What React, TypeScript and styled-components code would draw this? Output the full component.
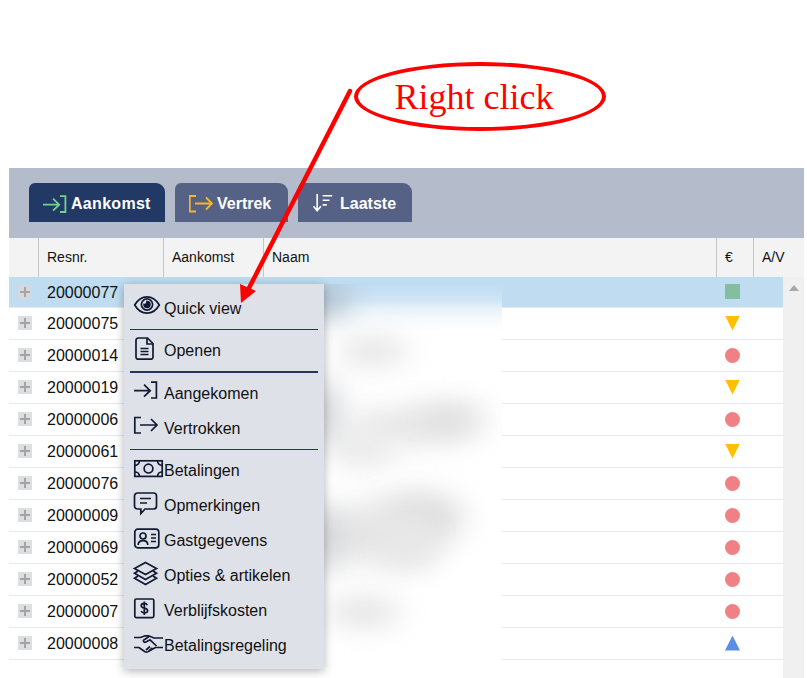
import React from "react";
import styled, { createGlobalStyle } from "styled-components";

const rows = [
  { id: "20000077", status: "square" },
  { id: "20000075", status: "down" },
  { id: "20000014", status: "circle" },
  { id: "20000019", status: "down" },
  { id: "20000006", status: "circle" },
  { id: "20000061", status: "down" },
  { id: "20000076", status: "circle" },
  { id: "20000009", status: "circle" },
  { id: "20000069", status: "circle" },
  { id: "20000052", status: "circle" },
  { id: "20000007", status: "circle" },
  { id: "20000008", status: "up" },
];

// blurred out guest names
const smudges = [
  { x: 14, y: 56, w: 70, h: 22, tone: "#dddddd" },
  { x: 24, y: 124, w: 130, h: 36, tone: "#e6e6e6" },
  { x: 92, y: 122, w: 70, h: 24, tone: "#dcdcdc" },
  { x: 10, y: 150, w: 60, h: 34, tone: "#e8e8e8" },
  { x: 55, y: 208, w: 85, h: 52, tone: "#dedede" },
  { x: 0, y: 218, w: 110, h: 64, tone: "#e6e6e6" },
  { x: 60, y: 245, w: 55, h: 40, tone: "#e8e8e8" },
  { x: 2, y: 315, w: 75, h: 26, tone: "#e0e0e0" },
  { x: -10, y: 0, w: 32, h: 34, tone: "#a9b6c2" },
  { x: -10, y: 95, w: 24, h: 70, tone: "#c8cace" },
  { x: -10, y: 220, w: 24, h: 70, tone: "#c8cace" },
];

const ArrowIn = () => (
  <>
    <path d="M0 9.7H16M10 3.7L16.2 9.7L10 15.7" />
    <path d="M17 1.2H22.4V17H17" />
  </>
);

const ArrowOut = () => (
  <>
    <path d="M7 1.5H.8V17H7" />
    <path d="M6 9H23M17 3L23 9L17 15" />
  </>
);

const menuIcons: Record<string, React.ReactNode> = {
  eye: (
    <>
      <path d="M.7 9C4 3.2 8 .8 13 .8S22 3.2 25.3 9C22 14.8 18 17.2 13 17.2S4 14.8 .7 9Z" />
      <circle cx="13" cy="8.5" r="5.6" />
      <path d="M13 5.6a2.9 2.9 0 1 1-2.9 2.9c1.6.4 3.2-1 2.9-2.9Z" fill="#111a33" />
    </>
  ),
  file: (
    <>
      <path d="M2 2.2A2.2 2.2 0 0 1 4.2 0H13.5L19 5.5V19A2.2 2.2 0 0 1 16.8 21.2H4.2A2.2 2.2 0 0 1 2 19Z" />
      <path d="M13 .2V6H19" />
      <path d="M6.5 10.5H14.5M6.5 13.5H14.5M6.5 16.5H14.5" />
    </>
  ),
  in: <ArrowIn />,
  out: <ArrowOut />,
  cash: (
    <>
      <rect x=".8" y="2.8" width="27.4" height="15.6" />
      <circle cx="14.5" cy="10.6" r="4.4" />
      <path d="M1 7.3A4.4 4.4 0 0 0 5.4 3M23.6 3A4.4 4.4 0 0 0 28 7.3M1 14A4.4 4.4 0 0 1 5.4 18.2M23.6 18.2A4.4 4.4 0 0 1 28 14" />
    </>
  ),
  chat: (
    <>
      <path d="M3.5 0H19.5A3 3 0 0 1 22.5 3V13A3 3 0 0 1 19.5 16H11L6.8 20.5V16H3.5A3 3 0 0 1 .5 13V3A3 3 0 0 1 3.5 0Z" />
      <path d="M6 5.5H17M6 10H13" />
    </>
  ),
  card: (
    <>
      <rect x=".8" y="1.2" width="24" height="18.6" rx="3" />
      <circle cx="9" cy="8" r="3" />
      <path d="M4.2 17C4.2 14 6 12.6 9 12.6S13.8 14 13.8 17" />
      <path d="M17 6.5H22M17 10H22M17 13.5H22" />
    </>
  ),
  layers: (
    <>
      <path d="M11.5-.5L22.5 5.5L11.5 11.5L.5 5.5Z" />
      <path d="M4 8L.5 10.2L11.5 16.4L22.5 10.2L19 8" />
      <path d="M4 13L.5 15.2L11.5 21.4L22.5 15.2L19 13" />
    </>
  ),
  fee: (
    <>
      <rect x=".8" y="1" width="19" height="18.6" rx="1.5" />
      <path d="M13.2 7.2C12.8 6 11.8 5.4 10.3 5.4 8.4 5.4 7.2 6.3 7.2 7.8 7.2 11.2 13.6 9.2 13.6 12.6 13.6 14.1 12.3 15 10.3 15 8.7 15 7.6 14.3 7.2 13.1M10.3 3.4V17" />
    </>
  ),
  shake: (
    <>
      <path d="M0 4.5H6.5L11 2.8H14.5L20 5H29" />
      <path d="M0 14.5H5L11 18.8C12.5 19.5 14 19 15 18L21.5 14.5H29" />
      <path d="M15 3.5L9.5 7.2C9 8.8 10.5 9.8 12 9L16 6.8L22.5 13" />
      <path d="M12 17L16 13.5M15 18L18.5 15" />
    </>
  ),
};

const menu = [
  { label: "Quick view", icon: "eye" },
  { divider: "thin" },
  { label: "Openen", icon: "file" },
  { divider: "thick" },
  { label: "Aangekomen", icon: "in" },
  { label: "Vertrokken", icon: "out" },
  { divider: "thin" },
  { label: "Betalingen", icon: "cash" },
  { label: "Opmerkingen", icon: "chat" },
  { label: "Gastgegevens", icon: "card" },
  { label: "Opties & artikelen", icon: "layers" },
  { label: "Verblijfskosten", icon: "fee" },
  { label: "Betalingsregeling", icon: "shake" },
];

const App = () => {
  return (
    <Page>
      <GlobalStyle />
      <Panel>
        <Toolbar>
          <Tab $active $width={136}>
            <TabIcon $color="#72d28c" viewBox="0 -1 24 18">
              <ArrowIn />
            </TabIcon>
            Aankomst
          </Tab>
          <Tab $width={113}>
            <TabIcon $color="#f6b626" viewBox="0 -.5 24 18">
              <ArrowOut />
            </TabIcon>
            Vertrek
          </Tab>
          <Tab $width={114}>
            <TabIcon $color="#ffffff" viewBox="0 0 24 22">
              <path d="M4.5 1V19M.5 14.5L4.5 19.5L8.5 14.5" />
              <path d="M10.5 3H21M10.5 8H18M10.5 13H15" />
            </TabIcon>
            Laatste
          </Tab>
        </Toolbar>
        <HeaderRow>
          <HeaderCell />
          <HeaderCell>Resnr.</HeaderCell>
          <HeaderCell>Aankomst</HeaderCell>
          <HeaderCell>Naam</HeaderCell>
          <HeaderCell>€</HeaderCell>
          <HeaderCell>A/V</HeaderCell>
        </HeaderRow>
        <Body>
          <Rows>
            {rows.map((row, i) => (
              <Row key={row.id} $selected={i === 0}>
                <Expander />
                <ResNr>{row.id}</ResNr>
                <StatusCell>
                  <Status $kind={row.status} />
                </StatusCell>
              </Row>
            ))}
          </Rows>
          <ScrollTrack>
            <ScrollUp />
          </ScrollTrack>
        </Body>
      </Panel>

      <Redacted>
        {smudges.map((s, i) => (
          <Smudge key={i} $x={s.x} $y={s.y} $w={s.w} $h={s.h} $tone={s.tone} />
        ))}
      </Redacted>

      <ContextMenu>
        {menu.map((item, i) =>
          item.divider ? (
            <Divider key={i} $thick={item.divider === "thick"} />
          ) : (
            <MenuItem key={i}>
              <MenuIcon viewBox="0 0 30 25">{menuIcons[item.icon!]}</MenuIcon>
              {item.label}
            </MenuItem>
          )
        )}
      </ContextMenu>

      <Callout>Right click</Callout>
      <Pointer viewBox="0 0 150 225">
        <line x1="141" y1="3" x2="40" y2="200" />
        <polygon points="31,196 47,203 32,215" />
      </Pointer>
    </Page>
  );
};

export default App;

const GlobalStyle = createGlobalStyle`
  html, body {
    margin: 0;
    padding: 0;
    background: #fff;
    overflow: hidden;
  }
`;
const Page = styled.div`
  position: relative;
  width: 807px;
  height: 678px;
  overflow: hidden;
  padding: 168px 3px 0 9px;
  box-sizing: border-box;
  display: flex;
  font-family: "Liberation Sans", Arial, sans-serif;
  color: #111;
`;
const Panel = styled.div`
  flex: 1;
  display: flex;
  flex-direction: column;
`;
const Toolbar = styled.div`
  height: 70px;
  box-sizing: border-box;
  padding: 15px 0 0 20px;
  background-color: #b4bccc;
  display: flex;
  gap: 10px;
`;
const Tab = styled.div<{ $active?: boolean; $width: number }>`
  width: ${(p) => p.$width}px;
  height: 39px;
  box-sizing: border-box;
  padding: 2px 0 0 14px;
  display: flex;
  align-items: center;
  gap: 4px;
  border-radius: 6px 9px 0 0;
  background-color: ${(p) => (p.$active ? "#223965" : "#556285")};
  color: white;
  font-size: 16px;
  font-weight: bold;
  letter-spacing: ${(p) => (p.$active ? "0.3px" : "0")};
`;
const TabIcon = styled.svg<{ $color: string }>`
  width: 24px;
  height: 20px;
  margin-top: -2px;
  fill: none;
  stroke: ${(p) => p.$color};
  stroke-width: 1.8;
`;
const HeaderRow = styled.div`
  height: 39px;
  display: grid;
  grid-template-columns: 30px 125px 100px 453px 37px 1fr;
  background-color: #f3f3f3;
  font-size: 14px;
`;
const HeaderCell = styled.div`
  display: flex;
  align-items: center;
  box-sizing: border-box;
  padding: 0 0 2px 8px;
  border-right: 1px solid #c6c6c6;
  &:last-child {
    border-right: none;
  }
`;
const Body = styled.div`
  flex: 1;
  display: flex;
`;
const Rows = styled.div`
  flex: 1;
`;
const Row = styled.div<{ $selected?: boolean }>`
  height: 32px;
  box-sizing: border-box;
  padding-bottom: 1px;
  display: flex;
  align-items: center;
  border-bottom: 1px solid #e8e8e8;
  background-color: ${(p) => (p.$selected ? "#bfdcf1" : "#fff")};
  &:first-child {
    height: 31px;
  }
`;
const Expander = styled.div`
  position: relative;
  width: 14px;
  height: 14px;
  margin-left: 9px;
  background-color: rgba(214, 216, 220, 0.85);
  &::before,
  &::after {
    content: "";
    position: absolute;
    background-color: #a4a4a4;
  }
  &::before {
    left: 2px;
    right: 2px;
    top: 6px;
    height: 2px;
  }
  &::after {
    top: 2px;
    bottom: 2px;
    left: 6px;
    width: 2px;
  }
`;
const ResNr = styled.div`
  margin: 2px 0 0 15px;
  font-size: 16px;
  width: 685px;
`;
const StatusCell = styled.div`
  width: 15px;
  height: 15px;
  margin-left: -7px;
`;
const Status = styled.div<{ $kind: string }>`
  width: 15px;
  height: 15px;
  background-color: ${(p) =>
    p.$kind === "square"
      ? "#83bf9e"
      : p.$kind === "circle"
      ? "#f18085"
      : p.$kind === "up"
      ? "#5b8fe6"
      : "#ffc000"};
  border-radius: ${(p) => (p.$kind === "circle" ? "50%" : "0")};
  clip-path: ${(p) =>
    p.$kind === "down"
      ? "polygon(0 0, 100% 0, 50% 100%)"
      : p.$kind === "up"
      ? "polygon(50% 0, 100% 100%, 0 100%)"
      : "none"};
`;
const ScrollTrack = styled.div`
  width: 21px;
  background-color: #f0f0f0;
  padding-top: 8px;
  box-sizing: border-box;
  display: flex;
  justify-content: center;
  align-items: flex-start;
`;
const ScrollUp = styled.div`
  width: 0;
  height: 0;
  border-left: 5px solid transparent;
  border-right: 5px solid transparent;
  border-bottom: 6px solid #a8a8a8;
`;
const Redacted = styled.div`
  position: absolute;
  left: 324px;
  top: 284px;
  width: 178px;
  height: 386px;
  overflow: hidden;
  background: linear-gradient(
    to bottom,
    #bfdcf1 0,
    #cfe5f5 16px,
    #e6f1f9 24px,
    #f5f9fc 34px,
    #fff 48px
  );
`;
const Smudge = styled.div<{ $x: number; $y: number; $w: number; $h: number; $tone: string }>`
  position: absolute;
  left: ${(p) => p.$x}px;
  top: ${(p) => p.$y}px;
  width: ${(p) => p.$w}px;
  height: ${(p) => p.$h}px;
  background-color: ${(p) => p.$tone};
  border-radius: 50%;
  filter: blur(14px);
`;
const ContextMenu = styled.div`
  position: absolute;
  left: 124px;
  top: 284px;
  width: 200px;
  box-sizing: border-box;
  padding: 7px 0 6px;
  background-color: #dfe1e9;
  box-shadow: 0 2px 9px rgba(0, 0, 0, 0.3);
`;
const MenuItem = styled.div`
  height: 35px;
  padding-left: 10px;
  display: flex;
  align-items: center;
  font-size: 16px;
`;
const MenuIcon = styled.svg`
  width: 30px;
  height: 25px;
  flex-shrink: 0;
  overflow: visible;
  fill: none;
  stroke: #111a33;
  stroke-width: 1.7;
`;
const Divider = styled.div<{ $thick?: boolean }>`
  height: ${(p) => (p.$thick ? "2px" : "1px")};
  margin: 3px 6px;
  background-color: #24365f;
`;
const Callout = styled.div`
  position: absolute;
  left: 354px;
  top: 62px;
  width: 252px;
  height: 69px;
  box-sizing: border-box;
  border: 4px solid #ff0000;
  border-radius: 50%;
  display: flex;
  align-items: center;
  justify-content: center;
  padding-right: 12px;
  font-family: "Liberation Serif", "Times New Roman", serif;
  font-size: 36px;
  color: #ff0000;
`;
const Pointer = styled.svg`
  position: absolute;
  left: 209px;
  top: 88px;
  width: 150px;
  height: 225px;
  line {
    stroke: #ff0000;
    stroke-width: 4.5;
    stroke-linecap: round;
  }
  polygon {
    fill: #ff0000;
  }
`;
